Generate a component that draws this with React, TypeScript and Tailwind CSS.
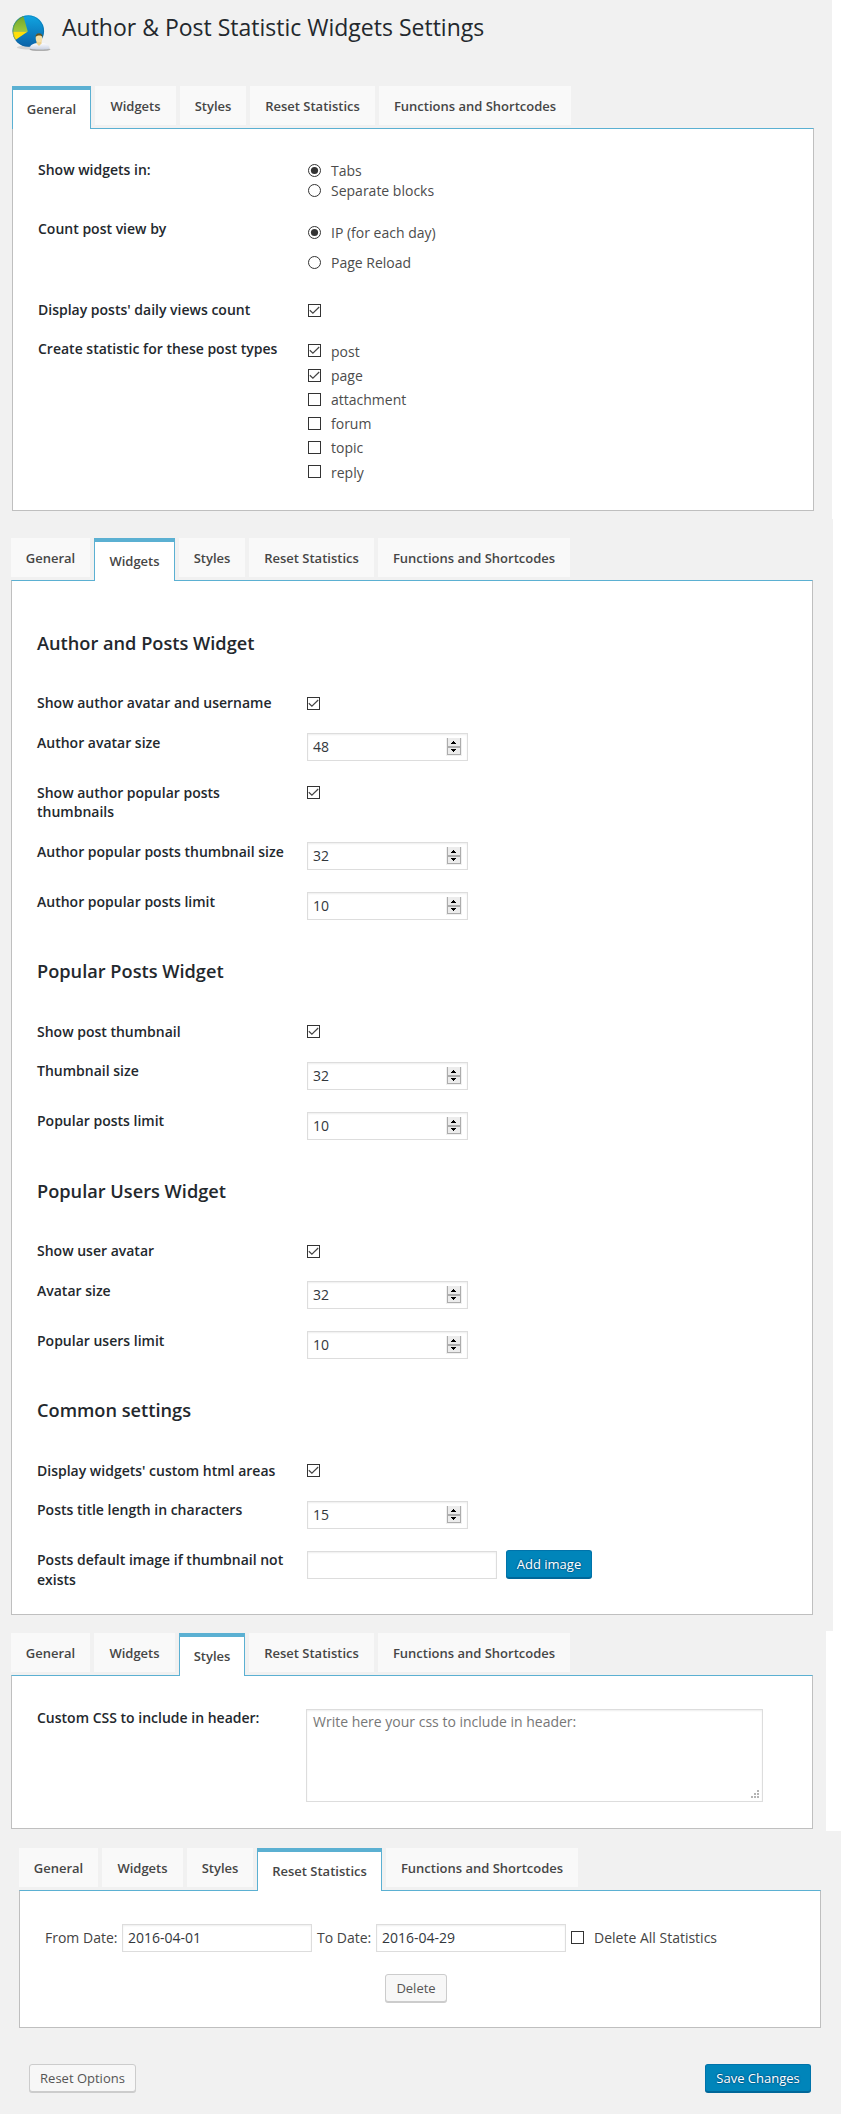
import type { ReactNode } from "react";

const TABS = [
  { name: "General", width: "w-[79px]" },
  { name: "Widgets", width: "w-[81px]" },
  { name: "Styles", width: "w-[66px]" },
  { name: "Reset Statistics", width: "w-[125px]" },
  { name: "Functions and Shortcodes", width: "w-[192px]" },
];

function Tabs({ active }: { active: string }) {
  return (
    <div className="flex h-[42px] items-start gap-1">
      {TABS.map((t) => (
        <div
          key={t.name}
          className={
            (t.name === active
              ? "relative h-[43px] border-x border-t-4 border-[#5bb0d2] bg-white pt-[10px] "
              : "h-[39px] bg-[#f9f9f9] pt-[11px] ") +
            "shrink-0 text-center text-[13px] leading-[18px] font-semibold whitespace-nowrap text-[#464646] " +
            t.width
          }
        >
          {t.name}
        </div>
      ))}
    </div>
  );
}

function Panel({ className, children }: { className: string; children: ReactNode }) {
  return (
    <div className={"w-[802px] border border-[#bfbfbf] border-t-[#5bb0d2] bg-white " + className}>
      {children}
    </div>
  );
}

function Row({
  label,
  className,
  control,
  leading = "leading-[19px]",
  children,
}: {
  label: string;
  className: string;
  control?: string;
  leading?: string;
  children: ReactNode;
}) {
  return (
    <div className={"flex items-start " + className}>
      <div className={"w-[270px] shrink-0 pr-5 text-[14px] font-semibold text-[#23282d] " + leading}>{label}</div>
      <div className={control}>{children}</div>
    </div>
  );
}

function Check({ on = false, className = "" }: { on?: boolean; className?: string }) {
  return (
    <svg width="13" height="13" viewBox="0 0 13 13" className={"block shrink-0 " + className}>
      <rect x="0.5" y="0.5" width="12" height="12" fill="#fff" stroke="#333" />
      {on && <path d="M1.800 6.200 L4.900 9.200 L11.200 3" fill="none" stroke="#444" strokeWidth="1.2" />}
    </svg>
  );
}

function Radio({ on = false }: { on?: boolean }) {
  return (
    <svg width="13" height="13" viewBox="0 0 13 13" className="mt-[3px] block shrink-0">
      <circle cx="6.5" cy="6.5" r="6" fill="#fff" stroke="#333" />
      {on && <circle cx="6.5" cy="6.5" r="3.6" fill="#333" />}
    </svg>
  );
}

function Option({ className, text, children }: { className: string; text: string; children: ReactNode }) {
  return (
    <div className={"flex items-start gap-[10px] text-sm leading-[19px] text-[#4c4c4c] " + className}>
      {children}
      <span>{text}</span>
    </div>
  );
}

const FIELD = "border border-[#ddd] bg-white shadow-[inset_0_1px_2px_rgba(0,0,0,0.07)] text-sm text-[#32373c] ";

function NumberField({ value }: { value: string }) {
  return (
    <div className={FIELD + "flex h-[28px] w-[161px] items-start justify-between pt-[3px] pr-[5px] pl-[5px] leading-[19px]"}>
      <span>{value}</span>
      <svg width="16" height="18" viewBox="0 0 16 18" className="mt-px" shapeRendering="crispEdges">
        <rect width="16" height="18" fill="#f0f0f0" />
        <rect x="1" y="0" width="14" height="9" fill="#acacac" />
        <rect x="2" y="0" width="12" height="8" fill="#ececec" />
        <rect x="1" y="9" width="14" height="8" fill="#acacac" />
        <rect x="2" y="10" width="12" height="6" fill="#ececec" />
        <path d="M7 3h1v1h1v1h1v1H5V5h1V4h1z" fill="#000" />
        <path d="M5 11h5v1H9v1H8v1H7v-1H6v-1H5z" fill="#000" />
      </svg>
    </div>
  );
}

function TextField({ value = "" }: { value?: string }) {
  return <div className={FIELD + "h-[28px] w-[190px] shrink-0 pt-[3px] pl-[5px] leading-[19px]"}>{value}</div>;
}

function Button({ primary = false, className, children }: { primary?: boolean; className: string; children: ReactNode }) {
  return (
    <button
      className={
        "block h-[28px] shrink-0 rounded-[3px] border text-center text-[13px] leading-[26px] whitespace-nowrap " +
        (primary
          ? "border-[#0073aa] border-b-[#006799] bg-[#0085ba] text-white shadow-[0_1px_0_#006799] [text-shadow:0_-1px_1px_#006799,1px_0_1px_#006799,0_1px_1px_#006799,-1px_0_1px_#006799] "
          : "border-[#ccc] bg-[#f7f7f7] text-[#555] shadow-[0_1px_0_#ccc] ") +
        className
      }
    >
      {children}
    </button>
  );
}

function Heading({ className, children }: { className: string; children: ReactNode }) {
  return <h3 className={"text-[18.2px] leading-[24px] font-semibold text-[#23282d] " + className}>{children}</h3>;
}

function Logo() {
  return (
    <svg width="40" height="40" viewBox="0 0 40 40" className="mt-[13px] shrink-0">
      <defs>
        <linearGradient id="blue" x1="0" y1="0" x2="0" y2="1">
          <stop offset="0" stopColor="#10a6e2" />
          <stop offset="1" stopColor="#0a62a8" />
        </linearGradient>
        <linearGradient id="green" x1="0" y1="0" x2="0" y2="1">
          <stop offset="0" stopColor="#6fa52c" />
          <stop offset="1" stopColor="#9dc93c" />
        </linearGradient>
        <linearGradient id="coat" x1="0" y1="0" x2="0" y2="1">
          <stop offset="0" stopColor="#fdfdff" />
          <stop offset="1" stopColor="#c9d1e2" />
        </linearGradient>
      </defs>
      <ellipse cx="19" cy="34.5" rx="14" ry="2" fill="#000" opacity="0.12" />
      <circle cx="16.3" cy="18" r="15.800" fill="url(#blue)" />
      <path d="M15.800 18.500 L0.600 18.500 A15.800 15.800 0 0 1 11.300 3 Z" fill="url(#green)" />
      <path d="M15.800 18.500 L0.600 18.500 A15.800 15.800 0 0 0 3.400 27 Z" fill="#ffdf0a" />
      <circle cx="16.3" cy="18" r="15.300" fill="none" stroke="#0c5f96" strokeOpacity="0.35" />
      <ellipse cx="28" cy="36.5" rx="10.5" ry="1.6" fill="#000" opacity="0.28" />
      <path d="M18 35 C18 31.5 21.5 30.5 25 30 L30 30 C34 30.5 37.5 31.5 37.5 35 C37.500 37 18 37 18 35 Z" fill="url(#coat)" />
      <path d="M24.500 26 h5 v4.500 l-2.500 2.500 l-2.500 -2.500 z" fill="#ecd08b" />
      <ellipse cx="27" cy="25" rx="3.300" ry="4.300" fill="#f5dfa6" />
      <path d="M23.500 24.200 C23 19 31 19 30.600 24.200 C29.800 22 24.600 22 23.500 24.200 Z" fill="#5f5323" />
    </svg>
  );
}

export default function App() {
  return (
    <div className="h-[2121px] w-[841px] overflow-hidden bg-white font-['Open_Sans',sans-serif] text-[#444]">
      <section className="h-[519px] w-[832px] bg-[#f1f1f1] pl-3">
        <header className="flex h-[86px] items-start">
          <Logo />
          <h1 className="mt-[12px] ml-[10px] text-[23px] leading-[31px] font-normal text-[#23282d]">
            Author &amp; Post Statistic Widgets Settings
          </h1>
        </header>
        <Tabs active="General" />
        <Panel className="h-[383px] pt-[31px] pl-[25px]">
          <Row label="Show widgets in:" className="h-[59px]" control="pt-px">
            <Option className="h-5" text="Tabs"><Radio on /></Option>
            <Option className="h-5" text="Separate blocks"><Radio /></Option>
          </Row>
          <Row label="Count post view by" className="h-[81px]" control="pt-1">
            <Option className="h-[30px]" text="IP (for each day)"><Radio on /></Option>
            <Option className="h-[30px]" text="Page Reload"><Radio /></Option>
          </Row>
          <Row label="Display posts' daily views count" className="h-[39px]" control="pt-1">
            <Check on />
          </Row>
          <Row label="Create statistic for these post types" className="h-[150px]" control="pt-[3px]">
            <Option className="h-6" text="post"><Check on className="mt-[2px]" /></Option>
            <Option className="h-6" text="page"><Check on className="mt-[3px]" /></Option>
            <Option className="h-6" text="attachment"><Check className="mt-[3px]" /></Option>
            <Option className="h-6" text="forum"><Check className="mt-[3px]" /></Option>
            <Option className="h-[25px]" text="topic"><Check className="mt-[3px]" /></Option>
            <Option className="h-6" text="reply"><Check className="mt-[2px]" /></Option>
          </Row>
        </Panel>
      </section>

      <section className="h-[1112px] w-[833px] bg-[#f1f1f1] pt-[19px] pl-[11px]">
        <Tabs active="Widgets" />
        <Panel className="h-[1035px] pt-[50px] pl-[25px]">
          <Heading className="h-[62px]">Author and Posts Widget</Heading>
          <Row label="Show author avatar and username" className="h-[40px]" control="pt-1"><Check on /></Row>
          <Row label="Author avatar size" className="h-[50px]"><NumberField value="48" /></Row>
          <Row label="Show author popular posts thumbnails" className="h-[59px]" control="pt-[3px]"><Check on /></Row>
          <Row label="Author popular posts thumbnail size" className="h-[50px]"><NumberField value="32" /></Row>
          <Row label="Author popular posts limit" className="h-[67px]"><NumberField value="10" /></Row>

          <Heading className="h-[63px]">Popular Posts Widget</Heading>
          <Row label="Show post thumbnail" className="h-[39px]" control="pt-[3px]"><Check on /></Row>
          <Row label="Thumbnail size" className="h-[50px]" control="pt-px"><NumberField value="32" /></Row>
          <Row label="Popular posts limit" className="h-[68px]" control="pt-px"><NumberField value="10" /></Row>

          <Heading className="h-[62px]">Popular Users Widget</Heading>
          <Row label="Show user avatar" className="h-[40px]" control="pt-1"><Check on /></Row>
          <Row label="Avatar size" className="h-[50px]"><NumberField value="32" /></Row>
          <Row label="Popular users limit" className="h-[67px]"><NumberField value="10" /></Row>

          <Heading className="h-[63px]">Common settings</Heading>
          <Row label="Display widgets' custom html areas" className="h-[39px]" control="pt-[3px]"><Check on /></Row>
          <Row label="Posts title length in characters" className="h-[50px]" control="pt-px"><NumberField value="15" /></Row>
          <Row
            label="Posts default image if thumbnail not exists"
            className="h-[60px]"
            control="flex items-start gap-[9px]"
            leading="leading-[20px]"
          >
            <div className="pt-px"><TextField /></div>
            <Button primary className="w-[86px]">Add image</Button>
          </Row>
        </Panel>
      </section>

      <section className="h-[200px] w-[826px] bg-[#f1f1f1] pt-[2px] pl-[11px]">
        <Tabs active="Styles" />
        <Panel className="h-[154px] pt-[32px] pl-[25px]">
          <Row label="Custom CSS to include in header:" className="h-[100px]">
            <div className={FIELD + "-ml-px mt-px flex h-[93px] w-[457px] items-start justify-between pt-[2px] pr-[2px] pb-[2px] pl-[6px] leading-[19px]"}>
              <span className="text-[#777]">Write here your css to include in header:</span>
              <svg width="9" height="9" viewBox="0 0 9 9" className="self-end" fill="#b4b4b4" shapeRendering="crispEdges">
                <path d="M6 0h2v2H6zM3 3h2v2H3zM6 3h2v2H6zM0 6h2v2H0zM3 6h2v2H3zM6 6h2v2H6z" />
              </svg>
            </div>
          </Row>
        </Panel>
      </section>

      <section className="h-[283px] w-[841px] bg-[#f1f1f1] pt-[17px] pl-[19px]">
        <Tabs active="Reset Statistics" />
        <Panel className="h-[138px] pt-[33px] pl-[25px]">
          <div className="flex h-[50px] items-start text-sm leading-[19px]">
            <span className="w-[77px] pt-[4px]">From Date:</span>
            <TextField value="2016-04-01" />
            <span className="w-[64px] pt-[4px] pl-[5px]">To Date:</span>
            <TextField value="2016-04-29" />
            <Check className="mt-[7px] ml-[5px]" />
            <span className="pt-[4px] pl-[10px]">Delete All Statistics</span>
          </div>
          <Button className="ml-[340px] w-[62px]">Delete</Button>
        </Panel>
        <div className="flex w-[792px] justify-between pt-[36px] pl-[10px]">
          <Button className="w-[107px]">Reset Options</Button>
          <Button primary className="w-[106px]">Save Changes</Button>
        </div>
      </section>
    </div>
  );
}
